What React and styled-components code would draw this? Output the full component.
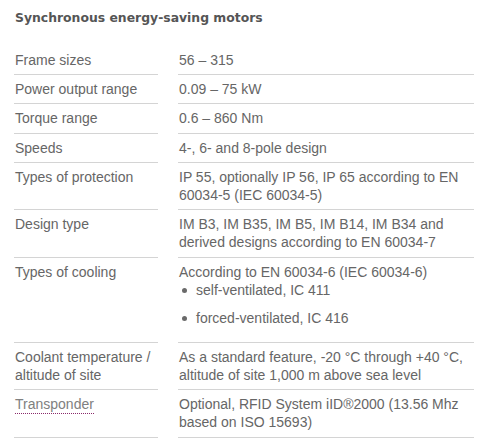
import React from "react";
import styled, { createGlobalStyle } from "styled-components";

const Global = createGlobalStyle`
  html, body { margin: 0; padding: 0; background: #fff; }
  body { font-family: "Liberation Sans", Arial, sans-serif; }
`;

const Page = styled.div`
  width: 501px;
  height: 439px;
  box-sizing: border-box;
  padding: 10px 27px 0 14px;
  overflow: hidden;
`;

const Title = styled.h2`
  margin: 0 0 20px 1px;
  font-family: "DejaVu Sans", Verdana, sans-serif;
  font-weight: bold;
  font-size: 12.4px;
  line-height: 16px;
  color: #555;
`;

const Table = styled.div`
  display: flex;
  flex-direction: column;
`;

const Row = styled.div`
  display: grid;
  grid-template-columns: 144px 296px;
  column-gap: 20px;
`;

const Cell = styled.div`
  padding: 5px 0 5px 1px;
  border-bottom: 1px solid #d4d4d4;
  font-size: 14px;
  line-height: 18.2px;
  color: #666;
`;

const Abbr = styled.span`
  color: #808080;
  border-bottom: 1px dotted #8a2a6a;
  padding-bottom: 1px;
`;

const BulletList = styled.ul`
  list-style: none;
  margin: 0;
  padding: 0;
`;

const BulletItem = styled.li`
  display: flex;
  align-items: center;
  margin-bottom: 9.8px;
  &::before {
    content: "";
    width: 5px;
    height: 5px;
    border-radius: 50%;
    background: #6a6a6a;
    margin: 1px 9px 0 3px;
    flex: none;
  }
`;

const rows = [
  ["Frame sizes", "56 – 315"],
  ["Power output range", "0.09 – 75 kW"],
  ["Torque range", "0.6 – 860 Nm"],
  ["Speeds", "4-, 6- and 8-pole design"],
  [
    "Types of protection",
    "IP 55, optionally IP 56, IP 65 according to EN 60034-5 (IEC 60034-5)",
  ],
  [
    "Design type",
    "IM B3, IM B35, IM B5, IM B14, IM B34 and derived designs according to EN 60034-7",
  ],
  [
    "Types of cooling",
    <>
      According to EN 60034-6 (IEC 60034-6)
      <BulletList>
        <BulletItem>self-ventilated, IC 411</BulletItem>
        <BulletItem>forced-ventilated, IC 416</BulletItem>
      </BulletList>
    </>,
  ],
  [
    "Coolant temperature / altitude of site",
    "As a standard feature, -20 °C through +40 °C, altitude of site 1,000 m above sea level",
  ],
  [
    <Abbr title="Transponder">Transponder</Abbr>,
    "Optional, RFID System iID®2000 (13.56 Mhz based on ISO 15693)",
  ],
];

export default function App() {
  return (
    <>
      <Global />
      <Page>
        <Title>Synchronous energy-saving motors</Title>
        <Table>
          {rows.map(([label, value], i) => (
            <Row key={i}>
              <Cell>{label}</Cell>
              <Cell>{value}</Cell>
            </Row>
          ))}
        </Table>
      </Page>
    </>
  );
}
